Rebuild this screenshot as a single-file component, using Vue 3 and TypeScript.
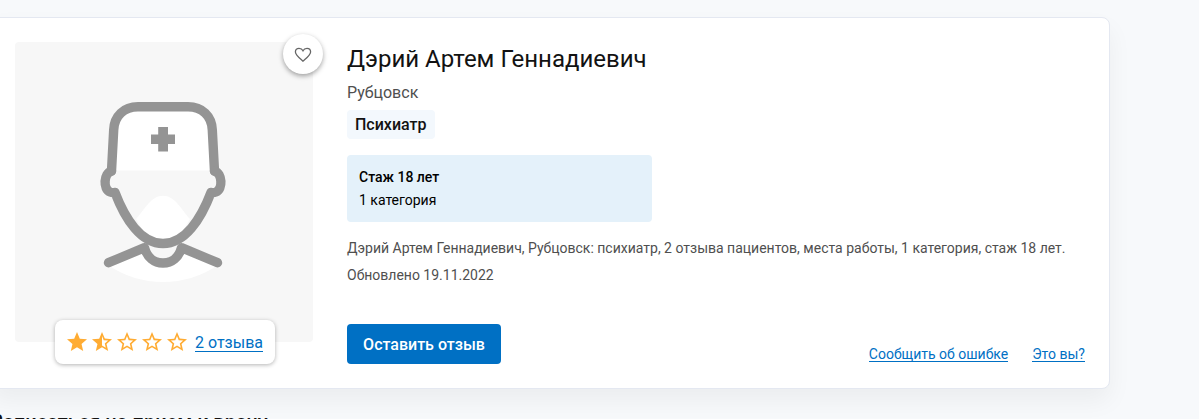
<script setup lang="ts">
type StarKind = 'full' | 'half' | 'empty'

const stars: StarKind[] = ['full', 'half', 'empty', 'empty', 'empty']
const outline =
  'M22 9.24l-7.19-.62L12 2 9.19 8.63 2 9.24l5.46 4.73L5.82 21 12 17.27 18.18 21l-1.63-7.03L22 9.24zM12 15.4l-3.76 2.27 1-4.28-3.32-2.88 4.38-.38L12 6.1l1.71 4.04 4.38.38-3.32 2.88 1 4.28L12 15.4z'
const starPaths: Record<StarKind, string> = {
  full: 'M12 17.27L18.18 21l-1.64-7.03L22 9.24l-7.19-.61L12 2 9.19 8.63 2 9.24l5.46 4.73L5.82 21z',
  half: 'M22 9.24l-7.19-.62L12 2 9.19 8.63 2 9.24l5.46 4.73L5.82 21 12 17.27 18.18 21l-1.63-7.03L22 9.24zM12 15.4V6.1l1.71 4.04 4.38.38-3.32 2.88 1 4.28L12 15.4z',
  empty: outline,
}
</script>

<template>
  <main class="page">
    <section class="card">
      <div class="photo">
        <svg class="avatar" viewBox="15 42 298 300" aria-hidden="true">
          <path class="white" d="M113 170.5L114 130Q116 107 137 107H189Q210 107 212 130L213 170.5Z" />
          <path class="white" d="M136 219C145 209 151 195.700 163 195.700S181 209 190 219L180 236Q163 250 146 236Z" />
          <path class="white" d="M108 265L144.500 249Q149 263 163 263T181.500 249L218 265Q193 282 163 282T108 265Z" />
          <g class="line">
            <path d="M111.500 171L113.700 130C114.200 116 124 106.800 138 106.800H188C202 106.800 211.800 116 212.300 130L214.500 171" />
            <path d="M111.500 171C103.500 173.500 103 189 110 192Q112 192.800 115 192.500C125 219 141 243.500 163 243.500S201 219 211 192.500Q214 192.800 216 192C223 189 222.500 173.500 214.500 171" />
            <path d="M108.500 262.700L144.500 247.700C147 257 154 263 163 263S179 257 181.500 247.700L217.500 262.700" />
          </g>
          <path class="cross" d="M158.200 127h9.800v7.500h7v9.500h-7v7.500h-9.800V144H151v-9.500h7.200z" />
        </svg>
        <button class="favorite" type="button" aria-label="В избранное">
          <svg viewBox="0 0 18 16" aria-hidden="true">
            <path d="M9 14.200L7.700 13C3.500 9.300 1.400 7.500 1.400 4.900C1.400 2.800 3 1.300 5 1.300C6.600 1.300 8.200 2.100 9 3.700C9.800 2.100 11.400 1.300 13 1.300C15 1.300 16.600 2.800 16.600 4.900C16.600 7.500 14.500 9.300 10.300 13Z" />
          </svg>
        </button>
        <div class="rating">
          <svg v-for="(kind, i) in stars" :key="i" class="star" viewBox="0 0 24 24" aria-hidden="true">
            <path :d="starPaths[kind]" />
          </svg>
          <a class="link reviews">2 отзыва</a>
        </div>
      </div>

      <div class="info">
        <h1>Дэрий Артем Геннадиевич</h1>
        <div class="city">Рубцовск</div>
        <span class="tag">Психиатр</span>
        <div class="facts">
          <strong>Стаж 18 лет</strong>
          <span>1 категория</span>
        </div>
        <p class="about">Дэрий Артем Геннадиевич, Рубцовск: психиатр, 2 отзыва пациентов, места работы, 1 категория, стаж 18 лет.</p>
        <p class="about updated">Обновлено 19.11.2022</p>
        <div class="actions">
          <button class="primary" type="button">Оставить отзыв</button>
          <nav class="links">
            <a class="link">Сообщить об ошибке</a>
            <a class="link">Это вы?</a>
          </nav>
        </div>
      </div>
    </section>
    <h2>Записаться на прием к врачу</h2>
  </main>
</template>

<style>
body {
  background: #f7f9fb;
}
</style>

<style scoped>
.page {
  box-sizing: border-box;
  height: 419px;
  padding-top: 17px;
  overflow: hidden;
  font-family: Roboto, "Liberation Sans", sans-serif;
  color: #121212;
}
.card {
  box-sizing: border-box;
  display: flex;
  gap: 34px;
  width: 1120px;
  height: 372px;
  margin-left: -10px;
  padding: 24px;
  border: 1px solid #e4e8f1;
  border-radius: 8px;
  background: #fff;
  box-shadow: 0 12px 24px rgba(0, 0, 0, 0.05);
}
.photo {
  position: relative;
  flex: none;
  width: 298px;
  height: 300px;
  border-radius: 4px;
  background: #f7f7f7;
}
.avatar {
  display: block;
  width: 298px;
  height: 300px;
}
.white {
  fill: #fff;
}
.line {
  fill: none;
  stroke: #949494;
  stroke-width: 9.4;
  stroke-linecap: round;
  stroke-linejoin: round;
}
.cross {
  fill: #949494;
}
.favorite {
  position: absolute;
  top: -8px;
  right: -10px;
  display: flex;
  align-items: center;
  justify-content: center;
  width: 40px;
  height: 40px;
  padding: 0;
  border: 0;
  border-radius: 50%;
  background: #fff;
  box-shadow: 0 2px 5px rgba(0, 0, 0, 0.36);
}
.favorite svg {
  width: 18px;
  height: 16px;
  margin-top: 1px;
  fill: none;
  stroke: #666;
  stroke-width: 1.3;
}
.rating {
  position: absolute;
  left: 40px;
  bottom: -22px;
  box-sizing: border-box;
  display: flex;
  align-items: center;
  gap: 1px;
  width: 220px;
  height: 44px;
  padding: 0 10px;
  border-radius: 8px;
  background: #fff;
  box-shadow: 0 1px 4px rgba(0, 0, 0, 0.3);
}
.star {
  flex: none;
  width: 24px;
  height: 24px;
  fill: #ffac33;
}
.link {
  border-bottom: 1px solid #0070c4;
  color: #0070c4;
  white-space: nowrap;
}
.reviews {
  margin-left: 5px;
  padding-top: 1px;
  font-size: 16px;
  line-height: 17px;
}
.info {
  flex: 1;
  display: flex;
  flex-direction: column;
  align-items: flex-start;
}
h1 {
  margin: 0;
  font-size: 24px;
  font-weight: 400;
  line-height: 34px;
}
.city {
  margin-top: 5px;
  font-size: 16px;
  line-height: 24px;
  color: #4f4f4f;
}
.tag {
  box-sizing: border-box;
  width: 88px;
  margin-top: 5px;
  padding: 0 8px;
  border-radius: 4px;
  background: #f3f8fd;
  font-size: 16px;
  font-weight: 500;
  line-height: 29px;
}
.facts {
  box-sizing: border-box;
  display: flex;
  flex-direction: column;
  width: 305px;
  height: 67px;
  margin-top: 16px;
  padding: 11px 12px;
  border-radius: 4px;
  background: #e4f1fa;
  color: #000;
  font-size: 14px;
  line-height: 23px;
}
.facts strong {
  font-weight: 500;
}
.about {
  margin: 16px 0 0;
  color: #4f4f4f;
  font-size: 14px;
  line-height: 20px;
}
.updated {
  margin-top: 7px;
}
.actions {
  align-self: stretch;
  display: flex;
  justify-content: space-between;
  align-items: flex-end;
  margin-top: 39px;
}
.primary {
  width: 154px;
  height: 40px;
  padding: 0;
  border: 0;
  border-radius: 4px;
  background: #0070c4;
  color: #fff;
  font: 500 16px Roboto, "Liberation Sans", sans-serif;
}
.links {
  display: flex;
  gap: 24px;
  padding-bottom: 2px;
  font-size: 14px;
  line-height: 14px;
}
.links .link {
  padding-top: 1px;
}
h2 {
  margin: 19px 0 0 -9px;
  font-size: 20px;
  font-weight: 500;
  line-height: 28px;
  white-space: nowrap;
}
</style>
